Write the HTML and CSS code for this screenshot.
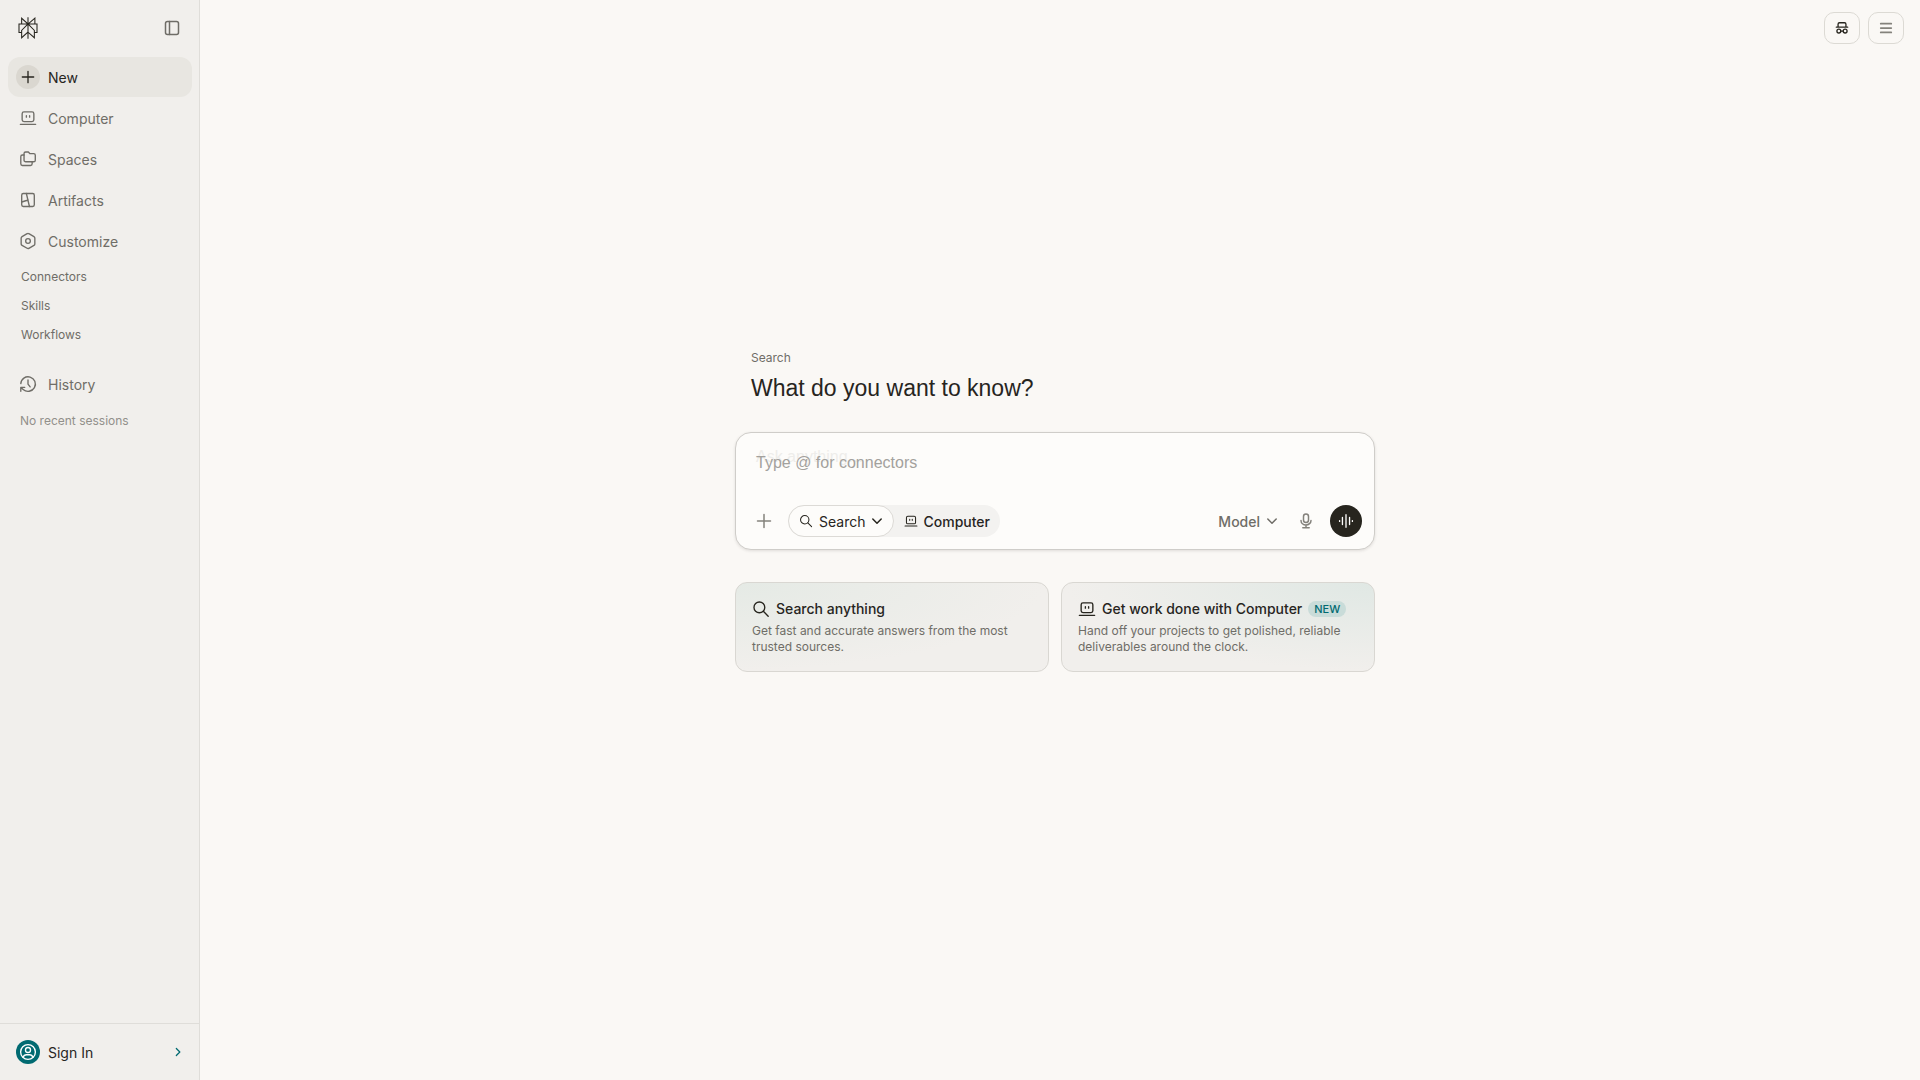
FILE: index.html
```html
<!DOCTYPE html>
<html lang="en">
<head>
    <meta charset="UTF-8">
    <meta name="viewport" content="width=device-width, initial-scale=1.0">
    <title>Perplexity</title>
    <link rel="stylesheet" href="styles.css">
</head>
<body>
    <svg class="sprite" aria-hidden="true">
        <symbol id="laptop" viewBox="0 0 20 20">
            <rect x="3.5" y="3.2" width="13" height="10.8" rx="2"/>
            <path d="M1.5 17h17M8.2 7.5v1.6M11.8 7.5v1.6"/>
        </symbol>
        <symbol id="search" viewBox="0 0 20 20">
            <circle cx="8.2" cy="8.2" r="6"/>
            <path d="M12.6 12.6l5.4 5.4"/>
        </symbol>
        <symbol id="chevron" viewBox="0 0 12 12">
            <path d="M1.8 4l4.2 4.2L10.2 4"/>
        </symbol>
        <symbol id="plus" viewBox="0 0 16 16">
            <path d="M8 1.5v13M1.5 8h13"/>
        </symbol>
    </svg>

    <aside class="sidebar">
        <div class="sidebar-top">
            <a class="logo" href="#" aria-label="Home">
                <svg viewBox="0 0 24 24"><path d="M22.3977 7.0896h-2.3106V.0676l-7.5094 6.3542V.1577h-1.1554v6.1966L4.4904 0v7.0896H1.6023v10.3976h2.8882V24l6.932-6.3591v6.2005h1.1554v-6.0469l6.9318 6.1807v-6.4879h2.8882V7.0896zm-3.4657-4.531v4.531h-5.355l5.355-4.531zm-13.2862.0676 4.8691 4.4634H5.6458V2.6262zM2.7576 16.332V8.245h7.8476l-6.1149 6.1147v1.9723H2.7576zm2.8882 5.0404v-3.8852h.0001v-2.6488l5.7763-5.7764v7.0111l-5.7764 5.2993zm12.7086.0248-5.7766-5.1509V9.0618l5.7766 5.7766v6.5588zm2.8882-5.0652h-1.733v-1.9723L13.3948 8.245h7.8478v8.087z"/></svg>
            </a>
            <button class="collapse" aria-label="Collapse sidebar">
                <svg class="icon" viewBox="0 0 16 16"><rect x="1.5" y="1.5" width="13" height="13" rx="2"/><path d="M5.5 1.5v13"/></svg>
            </button>
        </div>

        <nav class="nav">
            <a class="nav-item active" href="#">
                <span class="nav-icon"><svg class="icon small"><use href="#plus"/></svg></span>New
            </a>
            <a class="nav-item" href="#">
                <span class="nav-icon"><svg class="icon"><use href="#laptop"/></svg></span>Computer
            </a>
            <a class="nav-item" href="#">
                <span class="nav-icon"><svg class="icon" viewBox="0 0 20 20"><path d="M7.4 2.2h3l1.8 1.9h4.1a1.8 1.8 0 0 1 1.8 1.8v5.4a1.8 1.8 0 0 1-1.8 1.8H7.4a1.8 1.8 0 0 1-1.8-1.8V4a1.8 1.8 0 0 1 1.8-1.8z"/><path d="M5.6 5.6H3.8A1.8 1.8 0 0 0 2 7.4v8a1.8 1.8 0 0 0 1.8 1.8h9a1.8 1.8 0 0 0 1.8-1.8v-2.2"/></svg></span>Spaces
            </a>
            <a class="nav-item" href="#">
                <span class="nav-icon"><svg class="icon" viewBox="0 0 20 20"><rect x="3" y="2.8" width="14" height="14.4" rx="1.8"/><path d="M8.2 2.8l3.4 14.4M3 12.2l7.2-2.2"/></svg></span>Artifacts
            </a>
            <a class="nav-item" href="#">
                <span class="nav-icon"><svg class="icon" viewBox="0 0 20 20"><path d="M10 1.6a2 2 0 0 1 1 .3l5.6 3.2a2 2 0 0 1 1 1.7v6.4a2 2 0 0 1-1 1.7L11 18.1a2 2 0 0 1-2 0l-5.600-3.200a2 2 0 0 1-1-1.700V6.800a2 2 0 0 1 1-1.700L9 1.900a2 2 0 0 1 1-.3z"/><circle cx="10" cy="10" r="2.6"/></svg></span>Customize
            </a>
            <a class="nav-sub" href="#">Connectors</a>
            <a class="nav-sub" href="#">Skills</a>
            <a class="nav-sub" href="#">Workflows</a>
            <a class="nav-item history" href="#">
                <span class="nav-icon"><svg class="icon" viewBox="0 0 20 20"><path d="M2 9.6A8.1 8.1 0 1 1 4.6 16M2 18v-4.300h4.400M4.600 16L2.200 13.800M10 5.600v4.600l2.400 3"/></svg></span>History
            </a>
            <p class="empty">No recent sessions</p>
        </nav>

        <button class="sign-in">
            <span class="avatar"><svg class="icon" viewBox="0 0 20 20"><circle cx="10" cy="10" r="8.2"/><circle cx="10" cy="7.8" r="2.8"/><path d="M4.6 15.8c.6-2 2-2.8 3.6-2.8h3.6c1.6 0 3 .8 3.6 2.8"/></svg></span>
            <span>Sign In</span>
            <svg class="icon arrow" viewBox="0 0 12 12"><path d="M4 1.8L8.2 6 4 10.2"/></svg>
        </button>
    </aside>

    <main class="main">
        <div class="top-actions">
            <button class="square dark" aria-label="Incognito">
                <svg class="icon" viewBox="0 0 16 16"><path d="M1.500 7h13M3.500 7V3.600A1.600 1.600 0 0 1 5.100 2h5.800a1.600 1.600 0 0 1 1.600 1.600V7M6.500 11.500h3"/><circle cx="4.400" cy="11.500" r="2.200"/><circle cx="11.600" cy="11.500" r="2.200"/></svg>
            </button>
            <button class="square menu" aria-label="Menu">
                <svg class="icon" viewBox="0 0 16 16"><path d="M2 3h12M2 8h12M2 13h12"/></svg>
            </button>
        </div>

        <div class="content">
            <header class="intro">
                <p class="mode">Search</p>
                <h1>What do you want to know?</h1>
            </header>

            <form class="ask">
                <span class="ghost" aria-hidden="true">Ask anything…</span>
                <textarea rows="1" aria-label="Question" placeholder="Type @ for connectors"></textarea>
                <div class="toolbar">
                    <button type="button" class="round" aria-label="Add files"><svg class="icon"><use href="#plus"/></svg></button>
                    <div class="switch">
                        <button type="button" class="tab selected">
                            <svg class="icon"><use href="#search"/></svg>Search<svg class="icon chevron"><use href="#chevron"/></svg>
                        </button>
                        <button type="button" class="tab">
                            <svg class="icon"><use href="#laptop"/></svg>Computer
                        </button>
                    </div>
                    <button type="button" class="model">Model<svg class="icon chevron"><use href="#chevron"/></svg></button>
                    <button type="button" class="round mic" aria-label="Dictate">
                        <svg class="icon" viewBox="0 0 16 16"><rect x="5.5" y="1" width="5" height="8.5" rx="2.5"/><path d="M3 7.5a5 4.5 0 0 0 10 0M8 12v2.8M4.800 14.800h6.400"/></svg>
                    </button>
                    <button type="button" class="round voice" aria-label="Voice mode">
                        <svg class="icon" viewBox="0 0 18 18"><path d="M1.8 8.5v1M5 5v8M9 2v14M13 5v8M16.2 8.5v1"/></svg>
                    </button>
                </div>
            </form>

            <div class="cards">
                <a class="card" href="#">
                    <h2><svg class="icon"><use href="#search"/></svg>Search anything</h2>
                    <p>Get fast and accurate answers from the most trusted sources.</p>
                </a>
                <a class="card computer" href="#">
                    <h2><svg class="icon"><use href="#laptop"/></svg>Get work done with Computer<span class="badge">NEW</span></h2>
                    <p>Hand off your projects to get polished, reliable deliverables around the clock.</p>
                </a>
            </div>
        </div>
    </main>
</body>
</html>
```
FILE: styles.css
```css
* {
    box-sizing: border-box;
}
body {
    margin: 0;
    min-height: 100vh;
    display: flex;
    background: #faf8f5;
    color: #27251e;
    font-family: Inter, sans-serif;
    font-size: 14px;
}
a {
    color: inherit;
    text-decoration: none;
}
button {
    font: inherit;
    color: inherit;
    background: none;
    border: none;
    padding: 0;
    cursor: pointer;
}
h1, h2, p {
    margin: 0;
}
.sprite {
    display: none;
}
.icon {
    width: 18px;
    height: 18px;
    flex-shrink: 0;
    fill: none;
    stroke: currentColor;
    stroke-width: 1.5;
    stroke-linecap: round;
    stroke-linejoin: round;
}
.icon.small {
    width: 14px;
    height: 14px;
}

/* Sidebar */
.sidebar {
    width: 200px;
    flex-shrink: 0;
    display: flex;
    flex-direction: column;
    background: #f1efec;
    border-right: 1px solid #dfddd9;
    color: #6f6d67;
}
.sidebar-top {
    display: flex;
    align-items: center;
    justify-content: space-between;
    padding: 17px 19px 15px 17px;
}
.logo svg {
    display: block;
    width: 22px;
    height: 22px;
    fill: #27251e;
}
.collapse .icon {
    display: block;
    width: 16px;
    height: 16px;
}
.nav {
    flex: 1;
    display: flex;
    flex-direction: column;
    padding: 3px 7px 0 8px;
}
.nav-item {
    display: flex;
    align-items: center;
    gap: 8px;
    height: 40px;
    margin-bottom: 1px;
    padding: 0 8px;
    border-radius: 12px;
}
.nav-item.active {
    background: #e8e6e1;
    color: #27251e;
}
.nav-icon {
    width: 24px;
    height: 24px;
    display: flex;
    align-items: center;
    justify-content: center;
    border-radius: 50%;
}
.active .nav-icon {
    background: #dad7d0;
}
.nav-sub {
    padding: 7px 13px;
    font-size: 12px;
    line-height: 15px;
}
.nav-item.history {
    margin-top: 15px;
}
.empty {
    padding: 8px 12px;
    color: #92908b;
    font-size: 12px;
    line-height: 16px;
}
.sign-in {
    display: flex;
    align-items: center;
    gap: 8px;
    height: 57px;
    padding: 0 16px;
    border-top: 1px solid #dfddd9;
    color: #27251e;
}
.avatar {
    width: 24px;
    height: 24px;
    display: flex;
    align-items: center;
    justify-content: center;
    border-radius: 50%;
    background: #016a71;
    color: #fff;
}
.sign-in .arrow {
    width: 10px;
    height: 10px;
    margin-left: auto;
    color: #016a71;
}

/* Main area */
.main {
    flex: 1;
    display: flex;
    flex-direction: column;
    padding: 12px 16px;
}
.top-actions {
    display: flex;
    justify-content: flex-end;
    gap: 8px;
}
.square {
    width: 36px;
    height: 32px;
    display: flex;
    align-items: center;
    justify-content: center;
    border: 1px solid #dcdad4;
    border-radius: 10px;
    color: #84827c;
}
.square.dark {
    color: #27251e;
}
.square .icon {
    width: 14px;
    height: 14px;
}
.square.menu .icon {
    stroke-width: 2;
}
.content {
    flex: 1;
    width: 100%;
    max-width: 650px;
    margin: 0 auto;
    padding: 0 10px 90px 0;
    display: flex;
    flex-direction: column;
    justify-content: center;
}
.intro {
    padding: 0 16px;
    margin-bottom: 28px;
}
.mode {
    color: #6f6d67;
    font-size: 12px;
    line-height: 16px;
}
h1 {
    margin-top: 6px;
    font-family: "Liberation Sans", sans-serif;
    font-size: 23px;
    font-weight: 400;
    line-height: 32px;
}

/* Ask box */
.ask {
    position: relative;
    padding: 18px 12px 12px;
    background: #fdfcfa;
    border: 1px solid #cfcdc9;
    border-radius: 16px;
    box-shadow: 0 1px 3px rgba(39, 37, 30, 0.12);
}
.ghost {
    position: absolute;
    top: 12px;
    left: 20px;
    color: #eeedea;
    font-family: "Liberation Sans", sans-serif;
    font-size: 16px;
    line-height: 24px;
}
.ask textarea {
    position: relative;
    display: block;
    width: 100%;
    height: 24px;
    margin-bottom: 30px;
    padding: 0 8px;
    border: none;
    outline: none;
    resize: none;
    background: none;
    color: #27251e;
    font-family: "Liberation Sans", sans-serif;
    font-size: 16px;
    line-height: 24px;
}
.ask textarea::placeholder {
    color: #a3a19d;
}
.toolbar {
    display: flex;
    align-items: center;
}
.round {
    width: 32px;
    height: 32px;
    display: flex;
    align-items: center;
    justify-content: center;
    border-radius: 50%;
    color: #84827c;
}
.round .icon {
    width: 16px;
    height: 16px;
}
.switch {
    display: flex;
    margin-left: 8px;
    border-radius: 16px;
    background: #f3f2f0;
}
.tab {
    display: flex;
    align-items: center;
    gap: 5px;
    height: 32px;
    padding: 0 9px;
    border: 1px solid transparent;
    border-radius: 16px;
    font-weight: 500;
}
.tab.selected {
    gap: 6px;
    padding: 0 10px;
    background: #fdfcfa;
    border-color: #dcdad6;
    font-weight: 400;
}
.tab .icon {
    width: 14px;
    height: 14px;
}
.icon.chevron,
.tab .icon.chevron {
    width: 12px;
    height: 12px;
}
.model {
    display: flex;
    align-items: center;
    gap: 6px;
    margin-left: auto;
    color: #6f6d67;
    font-weight: 500;
}
.mic {
    margin: 0 8px 0 12px;
}
.voice {
    background: #27251e;
    color: #fdfcfa;
}

/* Suggestion cards */
.cards {
    display: grid;
    grid-template-columns: 1fr 1fr;
    gap: 12px;
    margin-top: 32px;
}
.card {
    padding: 16px;
    border: 1px solid #d9d7d2;
    border-radius: 12px;
    background: radial-gradient(ellipse at top left, #e5eae5, #f1efec 70%);
}
.card.computer {
    background: radial-gradient(ellipse at top right, #e0e8e4, #f1efec 70%);
}
.card h2 {
    display: flex;
    align-items: center;
    gap: 6px;
    margin-bottom: 4px;
    font-size: 14px;
    font-weight: 500;
    line-height: 20px;
}
.card p {
    color: #6f6d67;
    font-size: 12px;
    line-height: 16px;
}
.badge {
    padding: 0 6px;
    border-radius: 8px;
    background: #c9dcd9;
    color: #016a71;
    font-size: 11px;
    line-height: 16px;
}
```
